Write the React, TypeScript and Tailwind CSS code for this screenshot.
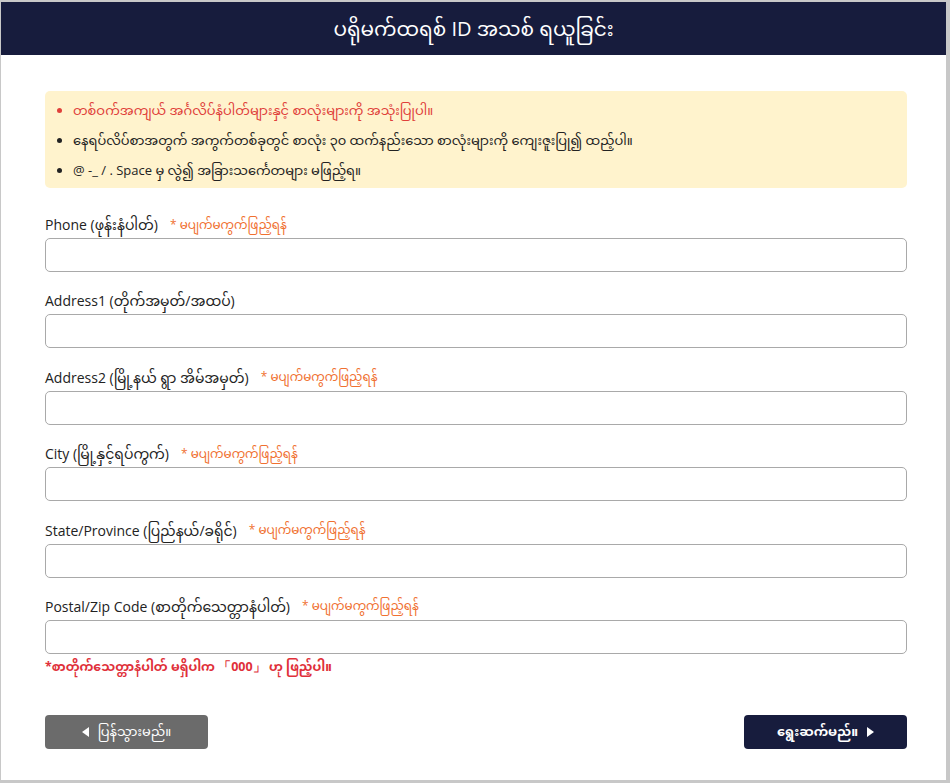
import { useState } from 'react';

const fields = [
  { id: 'phone', label: 'Phone (ဖုန်းနံပါတ်)', required: true },
  { id: 'address1', label: 'Address1 (တိုက်အမှတ်/အထပ်)', required: false },
  { id: 'address2', label: 'Address2 (မြို့နယ် ရွာ အိမ်အမှတ်)', required: true },
  { id: 'city', label: 'City (မြို့နှင့်ရပ်ကွက်)', required: true },
  { id: 'state', label: 'State/Province (ပြည်နယ်/ခရိုင်)', required: true },
  { id: 'postal', label: 'Postal/Zip Code (စာတိုက်သေတ္တာနံပါတ်)', required: true },
];

export default function App() {
  const [values, setValues] = useState<Record<string, string>>({});

  return (
    <div
      className="min-h-[783px] bg-[#c8c8c8] pl-px pr-[4px] pt-[2px] pb-[3px]"
      style={{ fontFamily: '"Open Sans", "Noto Sans", "Noto Sans Myanmar", Padauk, sans-serif' }}
    >
      <div className="bg-white h-[778px] flex flex-col">
        {/* Header */}
        <div className="h-[53px] bg-[#171c3d] flex items-center justify-center">
          <h1 className="text-white text-[20px] font-normal">ပရိုမက်ထရစ် ID အသစ် ရယူခြင်း</h1>
        </div>

        <div className="pl-[44px] pr-[39px] pt-[36px] flex flex-col">
          {/* Notice */}
          <div className="bg-[#fff3cd] rounded-[5px] pl-[13px] pr-4 pt-[4px] pb-[3px]">
            <ul className="list-disc pl-[15px] text-[13px] leading-[30px] text-[#222]">
              <li className="text-[#e0403a] marker:text-[#e0403a]">
                တစ်ဝက်အကျယ် အင်္ဂလိပ်နံပါတ်များနှင့် စာလုံးများကို အသုံးပြုပါ။
              </li>
              <li>နေရပ်လိပ်စာအတွက် အကွက်တစ်ခုတွင် စာလုံး ၃၀ ထက်နည်းသော စာလုံးများကို ကျေးဇူးပြု၍ ထည့်ပါ။</li>
              <li>@ -_ / . Space မှ လွဲ၍ အခြားသင်္ကေတများ မဖြည့်ရ။</li>
            </ul>
          </div>

          {/* Fields */}
          <div className="mt-[24px] flex flex-col gap-[16.4px]">
            {fields.map((f) => (
              <div key={f.id}>
                <label htmlFor={f.id} className="flex items-center gap-[12px] h-[25px] mb-[1px]">
                  <span className="text-[14px] text-[#222]">{f.label}</span>
                  {f.required && (
                    <span className="text-[12px] text-[#f07030]">* မပျက်မကွက်ဖြည့်ရန်</span>
                  )}
                </label>
                <input
                  id={f.id}
                  type="text"
                  value={values[f.id] || ''}
                  onChange={(e) => setValues({ ...values, [f.id]: e.target.value })}
                  className="w-full h-[34px] rounded-[5px] border border-[#a9a9a9] px-3 text-sm focus:outline-none"
                />
              </div>
            ))}
          </div>

          <p className="mt-[4px] text-[12.5px] font-bold text-[#e0303a]">
            *စာတိုက်သေတ္တာနံပါတ် မရှိပါက 「000」 ဟု ဖြည့်ပါ။
          </p>

          {/* Buttons */}
          <div className="mt-[38px] flex justify-between">
            <button className="w-[163px] h-[34px] rounded-[4px] bg-[#6b6b6b] text-white text-[13px] flex items-center justify-center gap-[8px]">
              <svg width="8" height="10" viewBox="0 0 8 10" fill="white">
                <path d="M7 0 L0 5 L7 10 Z" />
              </svg>
              ပြန်သွားမည်။
            </button>
            <button className="w-[163px] h-[34px] rounded-[4px] bg-[#171c3d] text-white text-[13px] font-bold flex items-center justify-center gap-[8px]">
              ရွေးဆက်မည်။
              <svg width="8" height="10" viewBox="0 0 8 10" fill="white">
                <path d="M1 0 L8 5 L1 10 Z" />
              </svg>
            </button>
          </div>
        </div>
      </div>
    </div>
  );
}
